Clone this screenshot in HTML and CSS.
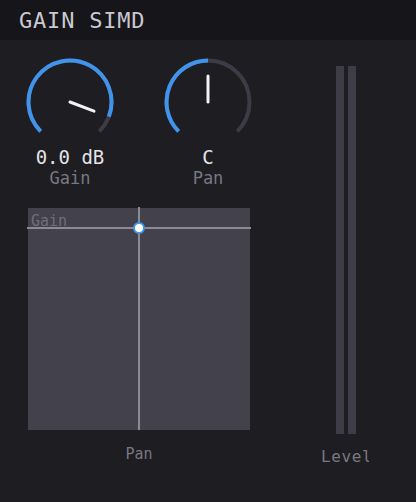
FILE: index.html
```html
<!DOCTYPE html>
<html>
<head>
<meta charset="utf-8">
<link rel="stylesheet" href="styles.css">
</head>
<body>
<div class="app">
  <header class="header">GAIN SIMD</header>
  <main class="main">
    <section class="left">
      <div class="knobs">
        <div class="knob">
          <svg class="knob-svg" width="88" height="88" viewBox="0 0 88 88">
            <path d="M14.66 73.34 A41.5 41.5 0 1 1 73.34 73.34" class="track"/>
            <path d="M14.66 73.34 A41.5 41.5 0 1 1 82.85 58.6" class="value"/>
            <line x1="44" y1="44" x2="68" y2="53.1" class="pointer"/>
          </svg>
          <div class="knob-value">0.0 dB</div>
          <div class="knob-label">Gain</div>
        </div>
        <div class="knob">
          <svg class="knob-svg" width="88" height="88" viewBox="0 0 88 88">
            <path d="M14.66 73.34 A41.5 41.5 0 1 1 73.34 73.34" class="track"/>
            <path d="M14.66 73.34 A41.5 41.5 0 0 1 44 2.5" class="value"/>
            <line x1="44" y1="44" x2="44" y2="18" class="pointer"/>
          </svg>
          <div class="knob-value">C</div>
          <div class="knob-label">Pan</div>
        </div>
      </div>
      <div class="pad">
        <div class="pad-axis">Gain</div>
        <div class="pad-h"></div>
        <div class="pad-v"></div>
        <div class="pad-handle"></div>
      </div>
      <div class="pad-label">Pan</div>
    </section>
    <section class="meter">
      <div class="bars">
        <div class="bar"></div>
        <div class="bar"></div>
      </div>
      <div class="meter-label">Level</div>
    </section>
  </main>
</div>
</body>
</html>
```
FILE: styles.css
```css
html, body {
  margin: 0;
  padding: 0;
  background: #1e1d22;
}
body {
  width: 416px;
  height: 502px;
  overflow: hidden;
  font-family: "DejaVu Sans Mono", "Liberation Mono", monospace;
}
.app {
  display: flex;
  flex-direction: column;
  height: 502px;
}
.header {
  height: 40px;
  box-sizing: border-box;
  padding-left: 19px;
  background: #16151a;
  color: #c9c9d1;
  font-size: 22px;
  letter-spacing: 0.8px;
  line-height: 42px;
}
.main {
  display: flex;
  padding: 18px 0 0 26px;
}
.left {
  width: 226px;
  display: flex;
  flex-direction: column;
}
.knobs {
  display: flex;
  gap: 50px;
}
.knob {
  width: 88px;
  display: flex;
  flex-direction: column;
  align-items: center;
}
.knob-svg {
  display: block;
}
.track {
  fill: none;
  stroke: #3d3c46;
  stroke-width: 4;
}
.value {
  fill: none;
  stroke: #4094ec;
  stroke-width: 4;
}
.pointer {
  stroke: #f2f2f4;
  stroke-width: 3;
  stroke-linecap: round;
}
.knob-value {
  margin-top: 0;
  font-size: 19px;
  line-height: 22px;
  color: #e4e4e9;
}
.knob-label {
  font-size: 17px;
  line-height: 20px;
  color: #797882;
}
.pad {
  position: relative;
  margin: 20px 0 0 2px;
  width: 222px;
  height: 222px;
  background: #42414c;
}
.pad-axis {
  position: absolute;
  left: 3px;
  top: 4px;
  font-size: 15px;
  line-height: 18px;
  color: #6f6e78;
}
.pad-h {
  position: absolute;
  left: -1px;
  right: -1px;
  top: 19px;
  height: 2px;
  background: #8b8a95;
}
.pad-v {
  position: absolute;
  top: -1px;
  bottom: 0;
  left: 110px;
  width: 2px;
  background: #8b8a95;
}
.pad-handle {
  position: absolute;
  left: 105px;
  top: 14px;
  width: 8px;
  height: 8px;
  border-radius: 50%;
  background: #ffffff;
  border: 2px solid #4094ec;
}
.pad-label {
  margin: 15px 0 0 2px;
  width: 222px;
  text-align: center;
  font-size: 15px;
  line-height: 18px;
  color: #797882;
}
.meter {
  margin-left: 70px;
  margin-top: 8px;
  width: 47px;
  overflow: hidden;
  display: flex;
  flex-direction: column;
  align-items: center;
}
.bars {
  display: flex;
  gap: 4px;
}
.bar {
  width: 8px;
  height: 368px;
  background: #3d3c47;
}
.meter-label {
  margin-top: 13px;
  margin-left: -1px;
  align-self: flex-start;
  white-space: nowrap;
  font-size: 16px;
  letter-spacing: 0.6px;
  line-height: 20px;
  color: #797882;
}
```
